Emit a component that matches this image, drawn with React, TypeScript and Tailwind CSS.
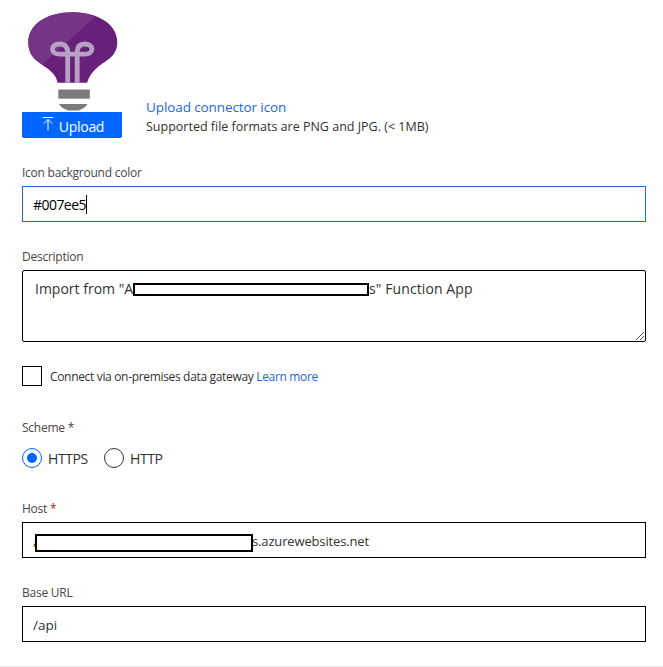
import type { ReactNode } from 'react';

function BulbIcon() {
  return (
    <svg width="100" height="100" viewBox="0 0 100 100" className="block">
      <path d="M50.5 0.3C25 0.3 6.3 12.5 6.3 30c0 15 9 19 17 25 7 5 11 9 12.2 15.7h29.5C67 64 71 59 77 54c8-6 18.300-10 18.300-24C95.300 12.500 76 0.300 50.500 0.300Z" fill="#68217a" />
      <path d="M50.500 0.300C25 0.300 6.300 12.500 6.300 30c0 13 7 18 14 22.700L73 4.500C66 1.500 59 0.300 50.500 0.300Z" fill="#763486" />
      <path
        d="M45.700 70.700V40c0-5-3-8-8-8-4.500 0-7.200 2.200-7.200 5.200 0 3 2.700 5 7.200 5h25c4.500 0 7.200-2 7.200-5 0-3-2.700-5.200-7.200-5.200-5 0-7.500 3-7.500 8v30.700"
        fill="none"
        stroke="#b8a2c3"
        strokeWidth="4.800"
      />
      <path d="M36.300 77.500h31.500v9.200H36.300z" fill="#7a7a7a" />
      <path d="M37 92h28.500c-2 3.500-5 5-9 6.500H46c-4-1.500-7-3-9-6.500z" fill="#7a7a7a" />
    </svg>
  );
}

function Label({ children }: { children: ReactNode }) {
  return <div className="h-[23px] text-[12px] leading-[20px] tracking-[-0.25px] text-[#484644]">{children}</div>;
}

function Redaction({ className }: { className: string }) {
  return <span className={`block shrink-0 border-2 border-black bg-white ${className}`} />;
}

export default function App() {
  return (
    <div className="h-[667px] w-[663px] overflow-hidden whitespace-nowrap border-b border-[#e6e6e6] bg-white pl-[22px] pr-[17px] pt-[12px] font-['Open_Sans','Noto_Sans',sans-serif] text-[#323130]">
      <div className="flex h-[151px] gap-[24px]">
        <div className="w-[100px]">
          <BulbIcon />
          <button className="flex h-[26px] w-full items-center justify-center gap-[5px] rounded-b-[2px] bg-[#0066ff] pl-[2px] text-[14px] leading-[20px] text-white">
            <svg width="12" height="15" viewBox="0 0 12 15" fill="none" stroke="white" className="mb-[3px]">
              <path d="M1 1.5h10M6 14.500v-11M2 7.500l4-4 4 4" />
            </svg>
            <span className="pt-[3px] tracking-[-0.3px]">Upload</span>
          </button>
        </div>
        <div className="pt-[85px]">
          <div className="text-[13.5px] leading-[20px] tracking-[-0.1px] text-[#2266e3]">Upload connector icon</div>
          <div className="text-[12.5px] leading-[19px]">Supported file formats are PNG and JPG. (&lt; 1MB)</div>
        </div>
      </div>

      <Label>Icon background color</Label>
      <div className="mb-[25px] flex h-[36px] items-center border border-[#1f6cc5] px-[10px] text-[14px] text-black">
        <span className="pt-[1px] tracking-[-0.55px]">#007ee5</span>
        <span className="h-[19px] w-px bg-black" />
      </div>

      <Label>Description</Label>
      <div className="mb-[24px] flex h-[72px] items-start rounded-[2px] border border-black pl-[12px] text-[14px] leading-[20px]">
        <div className="flex pt-[8px]">
          <span className="w-[98px]">Import from "A</span>
          <Redaction className="mt-[4px] h-[13px] w-[236px]" />
          <span className="tracking-[0.1px]">s" Function App</span>
        </div>
        <svg width="10" height="10" viewBox="0 0 10 10" className="ml-auto self-end" stroke="#444" strokeWidth="0.9">
          <path d="M1 9l8-8M5 9l4-4" />
        </svg>
      </div>

      <div className="mb-[32px] flex h-[20px] items-center">
        <span className="mr-[8px] h-[20px] w-[20px] border border-black" />
        <span className="pt-[2px] text-[12px] leading-[20px] tracking-[-0.33px]">
          Connect via on-premises data gateway <a className="text-[#2266e3]">Learn more</a>
        </span>
      </div>

      <div className="h-[30px] text-[12px] leading-[20px] tracking-[-0.25px] text-[#484644]">Scheme *</div>
      <div className="mb-[31px] flex h-[20px] items-center text-[14px] tracking-[-0.4px]">
        <span className="mr-[6px] flex h-[20px] w-[20px] items-center justify-center rounded-full border border-[#0066ff]">
          <span className="h-[10px] w-[10px] rounded-full bg-[#0066ff]" />
        </span>
        <span className="w-[56px] pt-[1px]">HTTPS</span>
        <span className="mr-[6px] h-[20px] w-[20px] rounded-full border border-[#323130]" />
        <span className="pt-[1px]">HTTP</span>
      </div>

      <Label>
        Host <span className="text-[#a4262c]">*</span>
      </Label>
      <div className="mb-[25px] flex h-[36px] items-start border border-black pl-[10px] pt-[9px] text-[13px] leading-[20px]">
        <span className="-mr-[5px] w-[7px]">a</span>
        <Redaction className="relative mt-[2px] h-[18px] w-[218px]" />
        <span className="-mt-px -ml-px tracking-[-0.15px]">s.azurewebsites.net</span>
      </div>

      <Label>Base URL</Label>
      <div className="flex h-[36px] items-center border border-black px-[10px] pt-[2px] text-[13.5px]">/api</div>
    </div>
  );
}
